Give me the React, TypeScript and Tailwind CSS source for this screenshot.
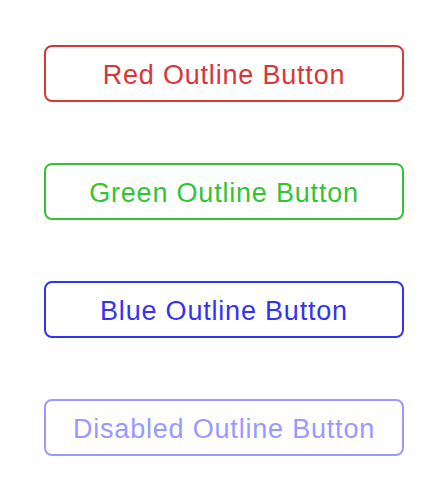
const buttons = [
  { label: 'Red Outline Button', cls: 'border-[#d93636] text-[#d93636]' },
  { label: 'Green Outline Button', cls: 'border-[#33c433] text-[#33c433]' },
  { label: 'Blue Outline Button', cls: 'border-[#3333f5] text-[#3333f5]' },
  { label: 'Disabled Outline Button', cls: 'border-[#9999ff] text-[#9999ff]', disabled: true },
];

export default function App() {
  return (
    <div className="w-[448px] h-[500px] bg-white flex flex-col gap-[61px] px-[44px] pt-[45px] font-['Liberation_Sans',Arial,sans-serif]">
      {buttons.map((b) => (
        <button
          key={b.label}
          disabled={b.disabled}
          className={`h-[57px] w-[360px] rounded-[8px] border-2 bg-white flex items-center justify-center pt-[3px] text-[27px] tracking-[0.8px] ${b.cls}`}
        >
          {b.label}
        </button>
      ))}
    </div>
  );
}
